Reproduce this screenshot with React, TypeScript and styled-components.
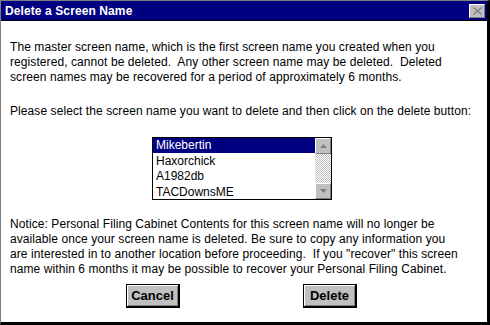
import React from "react";
import styled, { createGlobalStyle } from "styled-components";

const Global = createGlobalStyle`
  html, body { margin: 0; padding: 0; background: #ffffff; }
  body { font-family: "Liberation Sans", Arial, sans-serif; }
  * { box-sizing: border-box; }
`;

const Window = styled.div`
  width: 490px;
  height: 325px;
  display: flex;
  flex-direction: column;
  border-left: 1px solid #808080;
  border-top: 1px solid #808080;
  border-right: 3px solid #000;
  border-bottom: 3px solid #000;
  background: #fff;
`;

const TitleBar = styled.div`
  height: 20px;
  flex: none;
  background: #000080;
  border-bottom: 1px solid #000;
  display: flex;
  align-items: center;
  justify-content: space-between;
  padding: 0 2px 0 4px;
`;

const Title = styled.span`
  color: #fff;
  font-weight: bold;
  font-size: 12px;
  letter-spacing: 0.1px;
`;

const CloseBtn = styled.div`
  width: 16px;
  height: 14px;
  background: #c0c0c0;
  border-top: 1px solid #fff;
  border-left: 1px solid #fff;
  border-right: 1px solid #808080;
  border-bottom: 1px solid #808080;
  display: flex;
  align-items: center;
  justify-content: center;
`;

const Body = styled.div`
  flex: 1;
  display: flex;
  flex-direction: column;
  padding: 19px 0 0 9px;
`;

const Para = styled.p<{ $mt?: number }>`
  margin: ${(p) => p.$mt ?? 0}px 0 0 0;
  font-size: 12px;
  line-height: 15px;
  letter-spacing: 0.08px;
  color: #000;
  white-space: pre;
`;

const ListRow = styled.div`
  display: flex;
  padding-left: 142px;
  margin-top: 18px;
`;

const ListBox = styled.div`
  width: 180px;
  height: 63px;
  border: 1px solid #000;
  display: flex;
`;

const Items = styled.div`
  flex: 1;
  display: flex;
  flex-direction: column;
`;

const Item = styled.div<{ $sel?: boolean }>`
  height: 15px;
  line-height: 15px;
  padding-left: 3px;
  font-size: 12px;
  color: ${(p) => (p.$sel ? "#fff" : "#000")};
  background: ${(p) => (p.$sel ? "#000080" : "transparent")};
  margin-bottom: 0.5px;
`;

const ScrollBar = styled.div`
  width: 16px;
  display: flex;
  flex-direction: column;
  background-color: #fff;
  background-image: repeating-conic-gradient(#c0c0c0 0 25%, #fff 0 50%);
  background-size: 2px 2px;
`;

const Arrow = styled.div`
  width: 16px;
  height: 16px;
  background: #c0c0c0;
  border-top: 1px solid #fff;
  border-left: 1px solid #fff;
  border-right: 1px solid #808080;
  border-bottom: 1px solid #808080;
  display: flex;
  align-items: center;
  justify-content: center;
`;

const Track = styled.div`
  flex: 1;
`;

const ButtonRow = styled.div`
  display: flex;
  padding-left: 116px;
  margin-top: 7px;
  gap: 123px;
`;

const Button = styled.div`
  width: 54px;
  height: 24px;
  background: #c0c0c0;
  border: 1px solid #000;
  box-shadow: inset 1px 1px 0 #fff, inset -1px -1px 0 #808080;
  display: flex;
  align-items: center;
  justify-content: center;
  font-weight: bold;
  font-size: 13px;
  color: #000;
  border-right-width: 2px;
  border-bottom-width: 2px;
`;

const UpTri = () => (
  <svg width="7" height="4" viewBox="0 0 7 4">
    <path d="M3.5 0 L7 4 L0 4 Z" fill="#808080" />
  </svg>
);
const DownTri = () => (
  <svg width="7" height="4" viewBox="0 0 7 4">
    <path d="M0 0 L7 0 L3.5 4 Z" fill="#808080" />
  </svg>
);

export default function App() {
  return (
    <>
      <Global />
      <Window>
        <TitleBar>
          <Title>Delete a Screen Name</Title>
          <CloseBtn>
            <svg width="9" height="8" viewBox="0 0 9 8">
              <path d="M1 0 L4.5 3.2 L8 0 L9 1 L5.6 4 L9 7 L8 8 L4.5 4.8 L1 8 L0 7 L3.4 4 L0 1 Z" fill="#808080" />
            </svg>
          </CloseBtn>
        </TitleBar>
        <Body>
          <Para>
            {"The master screen name, which is the first screen name you created when you\nregistered, cannot be deleted.  Any other screen name may be deleted.  Deleted\nscreen names may be recovered for a period of approximately 6 months."}
          </Para>
          <Para $mt={19}>
            {"Please select the screen name you want to delete and then click on the delete button:"}
          </Para>
          <ListRow>
            <ListBox>
              <Items>
                <Item $sel>Mikebertin</Item>
                <Item>Haxorchick</Item>
                <Item>A1982db</Item>
                <Item>TACDownsME</Item>
              </Items>
              <ScrollBar>
                <Arrow><UpTri /></Arrow>
                <Track />
                <Arrow><DownTri /></Arrow>
              </ScrollBar>
            </ListBox>
          </ListRow>
          <Para $mt={17}>
            {"Notice: Personal Filing Cabinet Contents for this screen name will no longer be\navailable once your screen name is deleted. Be sure to copy any information you\nare interested in to another location before proceeding.  If you \"recover\" this screen\nname within 6 months it may be possible to recover your Personal Filing Cabinet."}
          </Para>
          <ButtonRow>
            <Button>Cancel</Button>
            <Button>Delete</Button>
          </ButtonRow>
        </Body>
      </Window>
    </>
  );
}
